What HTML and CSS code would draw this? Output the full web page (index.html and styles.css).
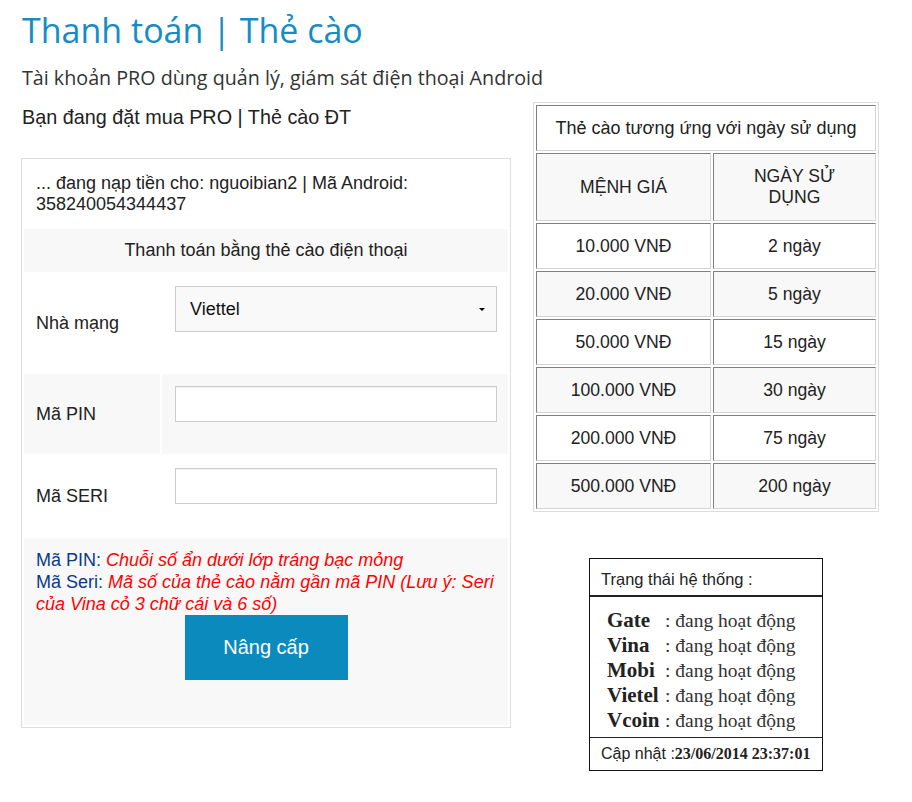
FILE: index.html
```html
<!DOCTYPE html>
<html lang="vi">

<head>
    <meta charset="UTF-8">
    <meta name="viewport" content="width=device-width, initial-scale=1.0">
    <title>Thanh toán | Thẻ cào</title>
    <link rel="stylesheet" href="styles.css">
</head>

<body>
    <div class="page">
        <h1 class="title">Thanh toán | Thẻ cào</h1>
        <p class="lead">Tài khoản PRO dùng quản lý, giám sát điện thoại Android</p>

        <div class="main">
            <div class="left">
                <p class="order">Bạn đang đặt mua PRO | Thẻ cào ĐT</p>
                <div class="panel">
                    <table class="pay">
                        <tr>
                            <td colspan="2" class="info">... đang nạp tiền cho: nguoibian2 | Mã Android: 358240054344437</td>
                        </tr>
                        <tr class="gray">
                            <td colspan="2" class="caption">Thanh toán bằng thẻ cào điện thoại</td>
                        </tr>
                        <tr>
                            <td class="label">Nhà mạng</td>
                            <td class="field">
                                <div class="select-wrap">
                                    <select id="network">
                                        <option value="VTT">Viettel</option>
                                        <option value="VMS">Mobifone</option>
                                        <option value="VNP">Vinaphone</option>
                                    </select>
                                </div>
                            </td>
                        </tr>
                        <tr class="gray">
                            <td class="label">Mã PIN</td>
                            <td class="field"><input type="text" id="pin"></td>
                        </tr>
                        <tr>
                            <td class="label">Mã SERI</td>
                            <td class="field"><input type="text" id="seri"></td>
                        </tr>
                        <tr class="gray">
                            <td colspan="2" class="notes">
                                <span class="key">Mã PIN:</span> <em>Chuỗi số ẩn dưới lớp tráng bạc mỏng</em><br>
                                <span class="key">Mã Seri:</span> <em>Mã số của thẻ cào nằm gần mã PIN (Lưu ý: Seri của Vina cỏ 3 chữ cái và 6 số)</em>
                                <button type="submit" class="btn">Nâng cấp</button>
                            </td>
                        </tr>
                    </table>
                </div>
            </div>

            <div class="right">
                <table class="rates">
                    <tr>
                        <td colspan="2" class="rates-title">Thẻ cào tương ứng với ngày sử dụng</td>
                    </tr>
                    <tr class="gray head">
                        <td class="col1">MỆNH GIÁ</td>
                        <td>NGÀY SỬ DỤNG</td>
                    </tr>
                    <tr>
                        <td class="col1">10.000 VNĐ</td>
                        <td>2 ngày</td>
                    </tr>
                    <tr class="gray">
                        <td class="col1">20.000 VNĐ</td>
                        <td>5 ngày</td>
                    </tr>
                    <tr>
                        <td class="col1">50.000 VNĐ</td>
                        <td>15 ngày</td>
                    </tr>
                    <tr class="gray">
                        <td class="col1">100.000 VNĐ</td>
                        <td>30 ngày</td>
                    </tr>
                    <tr>
                        <td class="col1">200.000 VNĐ</td>
                        <td>75 ngày</td>
                    </tr>
                    <tr class="gray">
                        <td class="col1">500.000 VNĐ</td>
                        <td>200 ngày</td>
                    </tr>
                </table>

                <div class="status">
                    <div class="status-head">Trạng thái hệ thống :</div>
                    <div class="status-body">
                        <b>Gate</b><span>: đang hoạt động</span>
                        <b>Vina</b><span>: đang hoạt động</span>
                        <b>Mobi</b><span>: đang hoạt động</span>
                        <b>Vietel</b><span>: đang hoạt động</span>
                        <b>Vcoin</b><span>: đang hoạt động</span>
                    </div>
                    <div class="status-foot">Cập nhật :<b>23/06/2014 23:37:01</b></div>
                </div>
            </div>
        </div>
    </div>
</body>

</html>
```

FILE: styles.css
```css
body {
    margin: 0;
    font-family: "Liberation Sans", Arial, sans-serif;
    color: #222;
    background: #fff;
}

.page {
    padding-left: 21px;
}

.title {
    font-family: "Open Sans", sans-serif;
    font-weight: 400;
    font-size: 34px;
    line-height: 44px;
    color: #168dc2;
    margin: 8px 0 0 1px;
}

.lead {
    font-family: "Open Sans", sans-serif;
    font-size: 19.7px;
    line-height: 28px;
    color: #333;
    margin: 12px 0 0 1px;
}

.main {
    display: flex;
    gap: 22px;
    margin-top: 8px;
    align-items: flex-start;
}

.left {
    width: 490px;
}

.order {
    font-size: 19.8px;
    line-height: 34px;
    margin: 0 0 24px 1px;
}

.panel {
    border: 1px solid #ddd;
}

.pay {
    width: 100%;
    border-spacing: 2px;
    font-size: 18px;
    line-height: 21px;
}

.pay td {
    padding: 12px;
}

.pay .gray td,
.rates .gray td {
    background: #f8f8f8;
}

.pay .caption {
    text-align: center;
    padding: 11px 12px;
}

.pay .label {
    width: 112px;
    vertical-align: middle;
}

.pay .field {
    vertical-align: top;
    padding-left: 13px;
    padding-right: 11px;
}

.select-wrap {
    position: relative;
    margin-bottom: 28px;
}

.select-wrap::after {
    content: "";
    position: absolute;
    right: 12px;
    top: 22px;
    border-left: 3px solid transparent;
    border-right: 3px solid transparent;
    border-top: 3px solid #000;
}

select {
    display: block;
    width: 100%;
    height: 46px;
    appearance: none;
    -webkit-appearance: none;
    background: #f9f9f9;
    border: 1px solid #ccc;
    border-radius: 0;
    padding: 0 14px;
    font-family: inherit;
    font-size: 18px;
    color: #111;
}

input[type="text"] {
    display: block;
    box-sizing: border-box;
    width: 100%;
    height: 36px;
    margin-bottom: 20px;
    border: 1px solid #ccc;
    box-shadow: inset 0 1px 1px rgba(0, 0, 0, 0.06);
    background: #fff;
}

.pay .notes {
    padding: 11px 12px 12px;
    line-height: 22px;
}

.notes .key {
    color: #0b3a8c;
}

.notes em {
    color: #f00;
}

.btn {
    display: block;
    width: 163px;
    height: 65px;
    margin: 0 auto 33px;
    border: none;
    background: #0b8abd;
    color: #fff;
    font-family: inherit;
    font-size: 20px;
}

.right {
    width: 346px;
    margin-top: 2px;
}

.rates {
    width: 346px;
    border: 1px solid #ddd;
    border-spacing: 2px;
    font-size: 17.6px;
    line-height: 20px;
}

.rates td {
    border: 1px solid;
    border-color: #808080 #d4d4d4 #d4d4d4 #808080;
    padding: 12px;
    text-align: center;
}

.rates .col1 {
    width: 149px;
}

.rates .rates-title {
    padding: 12px 12px 12px;
    font-size: 18px;
}

.rates .head td {
    line-height: 21px;
    padding: 12px 20px;
}

.rates .head .col1 {
    width: 133px;
}

.status {
    width: 232px;
    margin: 46px auto 0;
    border: 1px solid #111;
    color: #222;
}

.status-head {
    font-size: 16.5px;
    height: 36px;
    line-height: 40px;
    padding-left: 11px;
    border-bottom: 2px solid #222;
}

.status-body {
    display: grid;
    grid-template-columns: 58px auto;
    padding: 11px 0 4px 17px;
    font-family: "Liberation Serif", "Times New Roman", serif;
    font-size: 19.5px;
    line-height: 25px;
    color: #333;
}

.status-body b {
    color: #222;
    font-size: 21px;
}

.status-foot {
    border-top: 1px solid #222;
    font-size: 16px;
    line-height: 32px;
    padding-left: 11px;
}

.status-foot b {
    font-family: "Liberation Serif", "Times New Roman", serif;
    font-size: 16px;
}
```
